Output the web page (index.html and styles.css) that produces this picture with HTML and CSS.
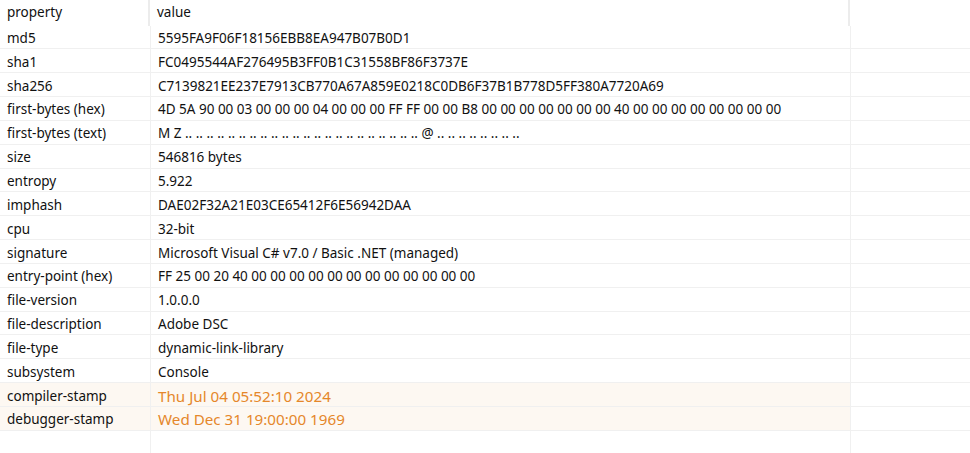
FILE: index.html
```html
<!DOCTYPE html>
<html lang="en">
<head>
  <meta charset="UTF-8" />
  <title>Properties</title>
  <link rel="stylesheet" href="styles.css">
</head>
<body>

  <!-- Tabla de propiedades -->
  <div class="tabla">
    <div class="fila cabecera">
      <div class="celda prop">property</div>
      <div class="celda valor">value</div>
      <div class="celda resto"></div>
    </div>

    <div class="fila"><div class="celda prop">md5</div><div class="celda valor">5595FA9F06F18156EBB8EA947B07B0D1</div><div class="celda resto"></div></div>
    <div class="fila"><div class="celda prop">sha1</div><div class="celda valor">FC0495544AF276495B3FF0B1C31558BF86F3737E</div><div class="celda resto"></div></div>
    <div class="fila"><div class="celda prop">sha256</div><div class="celda valor">C7139821EE237E7913CB770A67A859E0218C0DB6F37B1B778D5FF380A7720A69</div><div class="celda resto"></div></div>
    <div class="fila"><div class="celda prop">first-bytes (hex)</div><div class="celda valor">4D 5A 90 00 03 00 00 00 04 00 00 00 FF FF 00 00 B8 00 00 00 00 00 00 00 40 00 00 00 00 00 00 00 00</div><div class="celda resto"></div></div>
    <div class="fila"><div class="celda prop">first-bytes (text)</div><div class="celda valor">M Z .. .. .. .. .. .. .. .. .. .. .. .. .. .. .. .. .. .. .. .. .. .. @ .. .. .. .. .. .. .. ..</div><div class="celda resto"></div></div>
    <div class="fila"><div class="celda prop">size</div><div class="celda valor">546816 bytes</div><div class="celda resto"></div></div>
    <div class="fila"><div class="celda prop">entropy</div><div class="celda valor">5.922</div><div class="celda resto"></div></div>
    <div class="fila"><div class="celda prop">imphash</div><div class="celda valor">DAE02F32A21E03CE65412F6E56942DAA</div><div class="celda resto"></div></div>
    <div class="fila"><div class="celda prop">cpu</div><div class="celda valor">32-bit</div><div class="celda resto"></div></div>
    <div class="fila"><div class="celda prop">signature</div><div class="celda valor">Microsoft Visual C# v7.0 / Basic .NET (managed)</div><div class="celda resto"></div></div>
    <div class="fila"><div class="celda prop">entry-point (hex)</div><div class="celda valor">FF 25 00 20 40 00 00 00 00 00 00 00 00 00 00 00 00</div><div class="celda resto"></div></div>
    <div class="fila"><div class="celda prop">file-version</div><div class="celda valor">1.0.0.0</div><div class="celda resto"></div></div>
    <div class="fila"><div class="celda prop">file-description</div><div class="celda valor">Adobe DSC</div><div class="celda resto"></div></div>
    <div class="fila"><div class="celda prop">file-type</div><div class="celda valor">dynamic-link-library</div><div class="celda resto"></div></div>
    <div class="fila"><div class="celda prop">subsystem</div><div class="celda valor">Console</div><div class="celda resto"></div></div>
    <div class="fila alerta"><div class="celda prop">compiler-stamp</div><div class="celda valor">Thu Jul 04 05:52:10 2024</div><div class="celda resto"></div></div>
    <div class="fila alerta"><div class="celda prop">debugger-stamp</div><div class="celda valor">Wed Dec 31 19:00:00 1969</div><div class="celda resto"></div></div>

    <!-- relleno hasta abajo -->
    <div class="fila relleno"><div class="celda prop"></div><div class="celda valor"></div><div class="celda resto"></div></div>
  </div>

</body>
</html>
```

FILE: styles.css
```css
html, body {
  height: 100%;
}

body {
  font-family: "Noto Sans", sans-serif;
  font-size: 13.5px;
  color: #111;
  background: white;
  margin: 0;
  padding: 0;
}

.tabla {
  display: flex;
  flex-direction: column;
  height: 100%;
}

.fila {
  display: flex;
  height: 23.85px;
  box-sizing: border-box;
  border-bottom: 1px solid #f0f0f0;
  flex-shrink: 0;
}

.celda {
  box-sizing: border-box;
  padding: 2px 7px 0;
  display: flex;
  align-items: center;
  white-space: nowrap;
  border-right: 1px solid #f0f0f0;
}

.prop {
  width: 151px;
}

.valor {
  width: 700px;
}

.resto {
  flex: 1;
  border-right: none;
}

/* Cabecera */
.cabecera {
  height: 25.5px;
  border-bottom: none;
}

.cabecera .celda {
  border-right: 2px solid #ececec;
  padding: 0 7px 2px;
}

.cabecera .prop {
  width: 150px;
}

.cabecera .resto {
  border-right: none;
}

/* Filas resaltadas */
.alerta .prop,
.alerta .valor {
  background: #fdf8f2;
}

.alerta .valor {
  color: #e5872a;
  font-size: 15.2px;
}

.relleno {
  flex: 1;
  border-bottom: none;
}
```
